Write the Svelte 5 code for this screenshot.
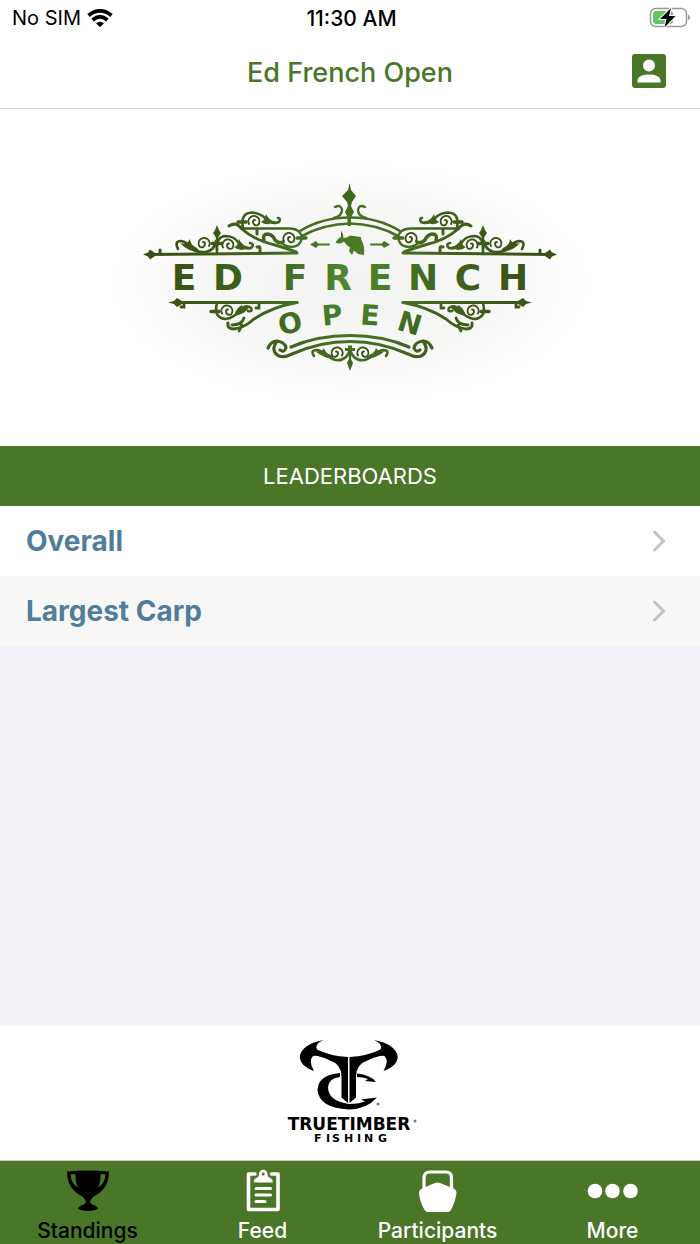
<script lang="ts">
  type Glyph = { char: string; x: number; y: number; angle?: number };

  const leaderboards = ['Overall', 'Largest Carp'];

  const tabs = [
    { id: 'standings', label: 'Standings' },
    { id: 'feed', label: 'Feed' },
    { id: 'participants', label: 'Participants' },
    { id: 'more', label: 'More' }
  ];

  const titleGlyphs: Glyph[] = [
    { char: 'E', x: 184, y: 290 },
    { char: 'D', x: 228, y: 290 },
    { char: 'F', x: 295, y: 290 },
    { char: 'R', x: 338, y: 290 },
    { char: 'E', x: 380, y: 290 },
    { char: 'N', x: 423, y: 290 },
    { char: 'C', x: 468, y: 290 },
    { char: 'H', x: 513, y: 290 }
  ];

  const openGlyphs: Glyph[] = [
    { char: 'O', x: 290, y: 333, angle: -12 },
    { char: 'P', x: 332, y: 325, angle: -5 },
    { char: 'E', x: 370, y: 325, angle: 4 },
    { char: 'N', x: 410, y: 333, angle: 17 }
  ];

  let active = $state('standings');
</script>

{#snippet spiral(x: number, y: number, flip: number = 1)}
  <path
    transform="translate({x} {y}) scale({flip} 1)"
    d="M-5 3 A5.500 5.500 0 1 1 4 4 A3.500 3.500 0 0 1 -1 1 A2 2 0 0 1 1 -1"
    stroke-width="1.900"
  />
{/snippet}

{#snippet ornament()}
  <!-- upper rail -->
  <path d="M150 254.500 L297 253" stroke-width="3" />
  <path class="solid" d="M143 254.500 L148 252.500 L150 249.500 L155 253 L155 256 L150 259.500 L148 256.500 Z" />
  <path d="M160 253 V250 M260 252 V248 Q260 246 257 247" stroke-width="3" />
  <path d="M229 226 Q236 221 242 229 Q254 240 275 245 Q286 248 296 252" stroke-width="3" />
  <path d="M242 228.500 H290 Q301 229 302 238 Q300 247 291 247 Q284 246 281 242" stroke-width="2.400" />
  <path d="M297 238 H306 M238 222 H246 M212 243.500 H222" stroke-width="3.400" />
  <path d="M264 240 Q262 234 268 234 Q273 235 275 240 Q279 244 283 242" stroke-width="3.400" />
  <path d="M257 229 V234" stroke-width="3" />
  <path d="M243 228 Q240 213 252 212.500 Q260 213 265 218 Q272 225 279 222 Q281 218 278 218" stroke-width="2.600" />
  <path class="solid" d="M261 222 Q265 220 266 214 Q270 222 276 221 Q268 227 261 222 Z" />
  {@render spiral(254, 221)}
  {@render spiral(289, 238)}
  <path d="M217 236 V254" stroke-width="2.400" />
  <path class="solid" d="M217 225 L219 230 L221 233 L217 239 L213 233 L215 230 Z" />
  <path d="M178 249 Q174 241 181 241 Q187 242 190 247 Q196 253 206 252 Q215 250 216 241" stroke-width="2.600" />
  <path class="solid" d="M180 243 Q187 245 190 239 Q190 245 197 248 L200 252 Q188 252 180 243 Z" />
  {@render spiral(204, 243, -1)}
  <path d="M217 250 Q216 237 225 236 Q234 236 238 242 Q244 250 251 248 Q255 244 250 243" stroke-width="2.600" />
  <path class="solid" d="M234 247 Q238 246 239 239 Q242 246 250 247 Q241 253 234 247 Z" />
  {@render spiral(228, 244.5)}

  <!-- crown -->
  <path d="M300 231 Q322 217.500 350 217.500 M302 236 Q324 224 350 223.500" stroke-width="2.600" />
  <path d="M335 207 Q341 204 342 210 Q342 216 334 218" stroke-width="2.400" />
  <path d="M316 244.500 H329" stroke-width="2" />
  <path class="solid" d="M310 244.500 L316 241 L319 244.500 L316 248 Z" />

  <!-- lower rail -->
  <path d="M176 302.500 H297" stroke-width="3" />
  <path class="solid" d="M168 302.500 L174 301 L177 298 L182 301 V304 L177 307 L174 304 Z" />
  <path d="M184 303 V307 H181 M259 303 V308 H256" stroke-width="2.800" />
  <path d="M297 302.500 Q272 307 254 319 Q244 328 234 329 Q227 329 228 323" stroke-width="3" />
  <path d="M232 325 Q242 325 244 318 M239 331 L242 325" stroke-width="2.800" />
  <path d="M217 303 Q213 318 226 319 Q234 318 240 310 Q246 304 251 308 Q253 312 248 311" stroke-width="2.600" />
  <path class="solid" d="M234 316 Q236 308 242 305 L243 308 L250 306 Q246 314 234 316 Z" />
  <path d="M211 311.500 H219" stroke-width="3.400" />
  {@render spiral(227, 310.5)}

  <!-- base -->
  <path d="M291 347 Q317 335.500 350 335.500" stroke-width="3.200" />
  <path d="M268 348 Q271 341 277 341 Q285 342 286 348 Q284 353 280 350 M277 341 Q270 351 279 356 Q284 358 292 354 Q320 341.500 350 341.500" stroke-width="3.200" />
  <path d="M314 356 Q310 350 317 350 Q323 351 328 356 Q338 364 346 357 Q349 354 350 349" stroke-width="2.600" />
  <path class="solid" d="M315 351 Q321 353 324 348 Q325 353 331 355 L334 359 Q323 358 315 351 Z" />
  {@render spiral(337, 352.5, -1)}
{/snippet}

<div class="screen">
  <div class="status">
    <div class="carrier">
      <span>No SIM</span>
      <svg width="26" height="19" viewBox="0 0 26 19" aria-hidden="true">
        <g fill="none" stroke="#000" stroke-width="3.800">
          <path d="M1.500 6.500 Q13 -2.800 24.500 6.500" />
          <path d="M5.500 11 Q13 4.600 20.500 11" />
        </g>
        <path d="M9 14.300 Q13 11 17 14.300 L13 18.300 Z" />
      </svg>
    </div>
    <time>11:30 AM</time>
    <svg class="battery" width="42" height="22" viewBox="0 0 42 22" role="img" aria-label="Charging">
      <rect x="1.500" y="1.500" width="36" height="18" rx="5" fill="#fff" stroke="#999" stroke-width="1.500" />
      <path d="M39 7.500 Q43 10.500 39 13.500 Z" fill="#999" />
      <rect x="4" y="4" width="20" height="13" rx="3" fill="#64c466" />
      <path d="M22 1 L11 12 H17.500 L15.500 20.500 L26.500 9 H20 Z" fill="#000" stroke="#fff" stroke-width="2" paint-order="stroke" />
    </svg>
  </div>

  <header>
    <h1>Ed French Open</h1>
    <button class="profile" aria-label="Profile">
      <svg width="34" height="34" viewBox="0 0 34 34">
        <rect width="34" height="34" rx="3" fill="#4a7628" />
        <circle cx="17" cy="11.500" r="6" fill="#fff" />
        <path d="M5.500 28.500 V26 Q6.500 20.500 17 20.500 Q27.500 20.500 28.500 26 V28.500 Z" fill="#fff" />
      </svg>
    </button>
  </header>

  <main>
    <section class="banner">
      <svg class="crest" viewBox="110 150 480 260" role="img" aria-label="Ed French Open">
        <defs>
          <radialGradient id="leaf" gradientUnits="userSpaceOnUse" cx="350" cy="280" r="190">
            <stop offset="0" stop-color="#4f8a30" />
            <stop offset="0.450" stop-color="#40661e" />
            <stop offset="1" stop-color="#3b4f14" />
          </radialGradient>
          <radialGradient id="halo">
            <stop offset="0" stop-color="#f2f2f0" />
            <stop offset="0.600" stop-color="#f7f7f6" />
            <stop offset="1" stop-color="#ffffff" />
          </radialGradient>
        </defs>
        <ellipse cx="350" cy="282" rx="236" ry="118" fill="url(#halo)" />

        <g class="ink">
          {@render ornament()}
          <g transform="translate(700 0) scale(-1 1)">
            {@render ornament()}
          </g>
          <path class="solid" d="M349.500 183 L351 190 L356 196 L352 202 L351 206 L354 212 L351 217 V226 H347.500 V217 L345 212 L348 206 L347 202 L342 196 L348 190 Z" />
          <path class="solid" d="M345 348 H348 V345.500 H352 V348 H355 V351 H352 L351 359 L353 363 L350 371 L347 363 L349 359 L348 351 H345 Z" />
          <path class="solid" d="M341 230.500 L343 234 L343.500 238 Q347 238 350 235.500 L361 237 L361 239 Q365 246 364 255 L358 254 L354 250.500 L352 255 L349 251 L350 247.500 Q346 245 344 241.500 Q340 245 335.500 242.500 Q338 238 341 237 Z" />
        </g>

        <g class="title-type">
          {#each titleGlyphs as g}
            <text x={g.x} y={g.y}>{g.char}</text>
          {/each}
        </g>
        <g class="open-type">
          {#each openGlyphs as g}
            <text x={g.x} y={g.y} transform="rotate({g.angle} {g.x} {g.y - 10})">{g.char}</text>
          {/each}
        </g>
      </svg>
    </section>

    <h2>LEADERBOARDS</h2>
    <ul class="boards">
      {#each leaderboards as board}
        <li>
          <a href="#{board.toLowerCase().replace(' ', '-')}">
            <span>{board}</span>
            <svg width="14" height="22" viewBox="0 0 14 22" aria-hidden="true">
              <path d="M2.500 2 L11.500 11 L2.500 20" fill="none" stroke="#c2c2c2" stroke-width="3" stroke-linecap="round" />
            </svg>
          </a>
        </li>
      {/each}
    </ul>
  </main>

  <section class="sponsor">
    <svg width="140" height="112" viewBox="280 1036 140 112" role="img" aria-label="TrueTimber Fishing">
      <path id="horn" d="M323.500 1040 Q314 1044 317 1049.500 Q330 1056 348 1057 V1103 L341.500 1097.500 V1076 Q341 1064 330 1060.500 Q318 1055 313 1056 Q308 1061 314 1071 Q300 1066 299.800 1056.500 Q302 1044 323.500 1040 Z" />
      <use href="#horn" transform="translate(697.500 0) scale(-1 1)" />
      <path d="M340 1073 Q318 1075 317.500 1090 Q319 1108 349 1109.500 Q367 1109 377 1097.500 L361 1099.500 L365 1101.500 Q358 1104 349 1104 Q328 1101 328 1087 Q329 1078 340 1077 Z" />
      <path d="M357 1073.500 Q371 1075 376 1082 L365 1081 L368 1079 Q363 1077 357 1077 Z" />
      <circle cx="378" cy="1104" r="1.500" fill="#777" />
      <text class="brand" x="349" y="1130">TRUETIMBER</text>
      <circle cx="415" cy="1121" r="1.500" fill="#777" />
      <text class="sub" x="314 326 332 344 357 364 378" y="1142">FISHING</text>
    </svg>
  </section>

  <nav>
    {#each tabs as tab}
      <a href="#{tab.id}" class:active={active === tab.id} onclick={() => (active = tab.id)}>
        <svg width="52" height="44" viewBox="0 0 52 44" fill="currentColor" aria-hidden="true">
          {#if tab.id === 'standings'}
            <path fill-rule="evenodd" d="M5 2.500 Q26 0.500 47 2.500 Q47 18 35 25.500 Q28 29 28 33.500 Q29 35.500 33 36.500 Q36 38 36 40 Q32 42 26 42 Q20 42 16 40 Q16 38 19 36.500 Q23 35.500 24 33.500 Q24 29 17 25.500 Q5 18 5 2.500 Z M8.500 5.500 Q9 14 16 19 Q13 12 13.500 5.500 Q11 4.500 8.500 5.500 Z M43.500 5.500 Q43 14 36 19 Q39 12 38.500 5.500 Q41 4.500 43.500 5.500 Z" />
          {:else if tab.id === 'feed'}
            <path d="M18 5 H11.500 V40.500 H41 V5 H34.500" fill="none" stroke="currentColor" stroke-width="3.600" stroke-linejoin="round" stroke-linecap="round" />
            <path fill-rule="evenodd" d="M17 13.500 Q16 10 21 8 Q22 7 22 5 A4 4 0 0 1 30.500 5 Q30.500 7 31.500 8 Q36.500 10 35.500 13.500 Z M26.200 3.500 A1.500 1.500 0 1 0 26.200 6.500 A1.500 1.500 0 1 0 26.200 3.500 Z" />
            <path d="M19 19.500 H33.500 M19 26 H33.500 M19 32.500 H28" stroke="currentColor" stroke-width="3" stroke-linecap="round" />
          {:else if tab.id === 'participants'}
            <path d="M12 20 V9 Q12 3 18 3 H34 Q39.500 3 39.500 9 V20" fill="none" stroke="currentColor" stroke-width="3.200" />
            <path d="M7 24 Q7 21 10 19.500 L23 14 Q25.500 13 28 14 L41.500 19.500 Q44.500 21 44.500 24 Q43 34 38.500 41.500 Q37.500 43 36 43 H16 Q14 43 13 41.500 Q8 34 7 24 Z" />
          {:else}
            <circle cx="8" cy="22" r="7.300" />
            <circle cx="25.500" cy="22" r="7.300" />
            <circle cx="43.500" cy="22" r="7.300" />
          {/if}
        </svg>
        <span>{tab.label}</span>
      </a>
    {/each}
  </nav>
</div>

<style>
  :global(body) {
    margin: 0;
  }

  .screen {
    display: flex;
    flex-direction: column;
    min-height: 100vh;
    background: #f0f0f6;
    font-family: Inter, 'Liberation Sans', sans-serif;
  }

  .status {
    display: grid;
    grid-template-columns: 1fr auto 1fr;
    align-items: center;
    height: 36px;
    padding: 0 9px 0 12px;
    background: #fff;
    color: #000;
    font-size: 20px;
  }

  .carrier {
    display: flex;
    align-items: center;
    gap: 6px;
  }

  time {
    font-size: 21px;
    font-weight: 500;
  }

  .battery {
    justify-self: end;
  }

  header {
    display: grid;
    grid-template-columns: 1fr auto 1fr;
    align-items: center;
    height: 72px;
    padding: 0 34px;
    border-bottom: 1px solid #d0d0d0;
    background: #fff;
  }

  h1 {
    grid-column: 2;
    margin: 0;
    color: #4a7628;
    font-size: 27px;
    font-weight: 500;
  }

  .profile {
    justify-self: end;
    display: flex;
    padding: 0 0 2px;
    border: none;
    background: none;
    cursor: pointer;
  }

  .banner {
    display: flex;
    justify-content: center;
    padding: 41px 0 36px;
    background: #fff;
  }

  .crest {
    width: 480px;
    max-width: 100%;
  }

  .ink {
    fill: none;
    stroke: url(#leaf);
    stroke-linecap: round;
  }

  .solid {
    fill: url(#leaf);
    stroke: none;
  }

  .title-type,
  .open-type {
    fill: url(#leaf);
    font-family: 'DejaVu Sans', sans-serif;
    font-weight: 700;
    text-anchor: middle;
  }

  .title-type {
    font-size: 36px;
  }

  .open-type {
    font-size: 28px;
  }

  h2 {
    margin: 0;
    background: #4a7628;
    color: #fff;
    font-size: 22px;
    font-weight: 400;
    line-height: 60px;
    text-align: center;
  }

  .boards {
    margin: 0;
    padding: 0;
    list-style: none;
  }

  .boards li {
    background: #fff;
  }

  .boards li:nth-child(even) {
    background: #f7f7f7;
  }

  .boards a {
    display: flex;
    align-items: center;
    justify-content: space-between;
    padding: 0 34px 0 26px;
    color: #507d9b;
    font-size: 28px;
    font-weight: 700;
    line-height: 70px;
    text-decoration: none;
  }

  .sponsor {
    display: flex;
    justify-content: center;
    margin-top: auto;
    padding: 11px 0 12px;
    background: #fff;
  }

  .brand {
    font-family: 'DejaVu Sans', sans-serif;
    font-size: 17px;
    font-weight: 700;
    text-anchor: middle;
  }

  .sub {
    font-family: 'DejaVu Sans', sans-serif;
    font-size: 11px;
    font-weight: 700;
  }

  nav {
    display: grid;
    grid-template-columns: repeat(4, 1fr);
    border-top: 1px solid #c3d0b8;
    background: #4a7628;
  }

  nav a {
    display: flex;
    flex-direction: column;
    align-items: center;
    gap: 6px;
    padding: 8px 0 1px;
    color: #fff;
    font-size: 21px;
    font-weight: 500;
    line-height: 24px;
    text-decoration: none;
  }

  nav a.active {
    color: #000;
  }
</style>
